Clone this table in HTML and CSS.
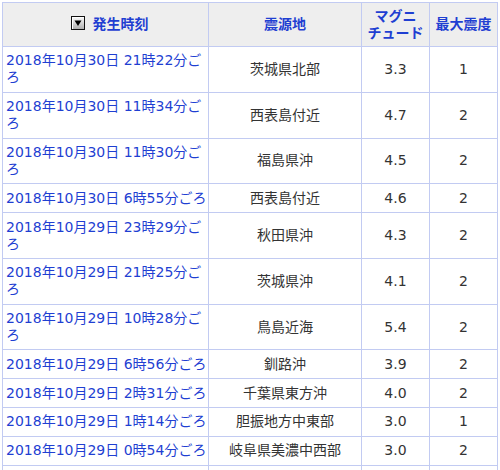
FILE: index.html
```html
<!DOCTYPE html>
<html lang="ja">
<head>
<meta charset="utf-8">
<link rel="stylesheet" href="styles.css">
</head>
<body>
<table class="quakes">
  <colgroup>
    <col class="c-time"><col class="c-place"><col class="c-mag"><col class="c-int">
  </colgroup>
  <thead>
    <tr>
      <th class="h-time"><span class="sort-icon"><svg width="12" height="12" viewBox="0 0 12 12"><path d="M2.5 3.5 L9.5 3.5 L6 9 Z" fill="#000"/></svg></span><a href="#">発生時刻</a></th>
      <th><a href="#">震源地</a></th>
      <th><a href="#">マグニ<br>チュード</a></th>
      <th><a href="#">最大震度</a></th>
    </tr>
  </thead>
  <tbody>
    <tr><td class="time"><a href="#">2018年10月30日 21時22分ごろ</a></td><td>茨城県北部</td><td>3.3</td><td>1</td></tr>
    <tr><td class="time"><a href="#">2018年10月30日 11時34分ごろ</a></td><td>西表島付近</td><td>4.7</td><td>2</td></tr>
    <tr><td class="time"><a href="#">2018年10月30日 11時30分ごろ</a></td><td>福島県沖</td><td>4.5</td><td>2</td></tr>
    <tr><td class="time"><a href="#">2018年10月30日 6時55分ごろ</a></td><td>西表島付近</td><td>4.6</td><td>2</td></tr>
    <tr><td class="time"><a href="#">2018年10月29日 23時29分ごろ</a></td><td>秋田県沖</td><td>4.3</td><td>2</td></tr>
    <tr><td class="time"><a href="#">2018年10月29日 21時25分ごろ</a></td><td>茨城県沖</td><td>4.1</td><td>2</td></tr>
    <tr><td class="time"><a href="#">2018年10月29日 10時28分ごろ</a></td><td>鳥島近海</td><td>5.4</td><td>2</td></tr>
    <tr><td class="time"><a href="#">2018年10月29日 6時56分ごろ</a></td><td>釧路沖</td><td>3.9</td><td>2</td></tr>
    <tr><td class="time"><a href="#">2018年10月29日 2時31分ごろ</a></td><td>千葉県東方沖</td><td>4.0</td><td>2</td></tr>
    <tr><td class="time"><a href="#">2018年10月29日 1時14分ごろ</a></td><td>胆振地方中東部</td><td>3.0</td><td>1</td></tr>
    <tr><td class="time"><a href="#">2018年10月29日 0時54分ごろ</a></td><td>岐阜県美濃中西部</td><td>3.0</td><td>2</td></tr>
    <tr><td class="time"><a href="#">2018年10月28日 22時10分ごろ</a></td><td>宮城県沖</td><td>3.6</td><td>1</td></tr>
  </tbody>
</table>
</body>
</html>
```

FILE: styles.css
```css
html, body {
  margin: 0;
  padding: 0;
  background: #fff;
}
body {
  padding: 2px 3px 0 2px;
  font-family: "DejaVu Sans", "Noto Sans CJK JP", sans-serif;
  font-size: 14px;
  color: #333;
}
.quakes {
  width: 495px;
  table-layout: fixed;
  border-collapse: collapse;
}
.c-time { width: 206px; }
.c-place { width: 153px; }
.c-mag { width: 68px; }
.c-int { width: 68px; }
.quakes th,
.quakes td {
  border: 1px solid #c2cbf2;
  padding: 5.4px 2px;
  line-height: 17px;
  text-align: center;
  vertical-align: middle;
}
.quakes th {
  background: #eeeeee;
  font-weight: bold;
  padding-top: 4.5px;
  padding-bottom: 4.5px;
}
.quakes th.h-time {
  padding-left: 10px;
}
.quakes a {
  color: #1f3fd2;
  text-decoration: none;
}
.quakes td.time {
  text-align: left;
  padding-left: 3px;
  padding-right: 0;
}
.sort-icon {
  display: inline-block;
  width: 12px;
  height: 12px;
  border: 1px solid #111;
  background: linear-gradient(#fafafa, #b0b0b0);
  vertical-align: -1px;
  margin-right: 8px;
  box-shadow: inset 1px 1px 0 #fff;
}
.sort-icon svg {
  display: block;
}
```
